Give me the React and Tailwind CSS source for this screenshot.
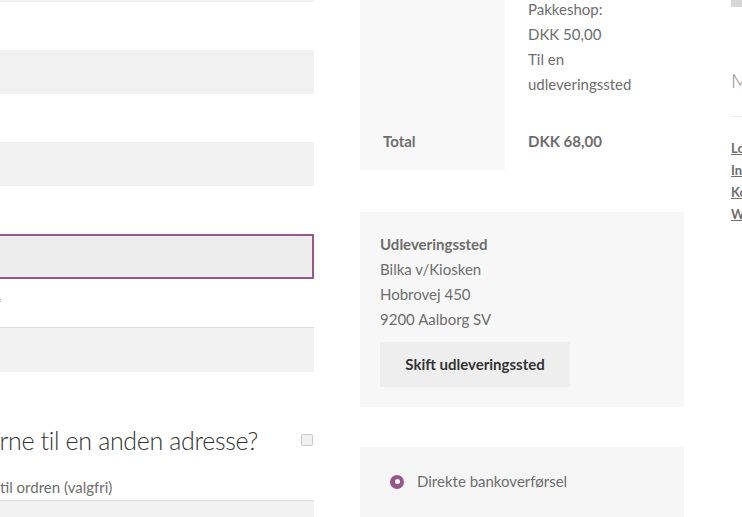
import { useState } from 'react';

const body = { fontFamily: '"Lato", "Liberation Sans", sans-serif' };

function Field({ label, required, focused, bordered, className = '' }) {
  return (
    <div className={className}>
      <label className="flex h-[48px] items-center whitespace-nowrap text-[15px] text-[#6d6d6d]">
        <span className={required ? 'w-[402px] shrink-0 text-right' : 'w-[380px] shrink-0 text-right'}>
          {label}
          {required ? <span className="text-[#e2401c]"> *</span> : null}
        </span>
      </label>
      <div
        className={
          focused
            ? 'h-[45px] border-2 border-[#96588a] bg-[#ededed]'
            : bordered
              ? 'h-[45px] border-t border-[#dcdcdc] bg-[#f2f2f2]'
              : 'h-[44px] bg-[#f2f2f2]'
        }
      />
    </div>
  );
}

function CheckoutFields() {
  return (
    <div className="ml-[-400px] w-[714px] shrink-0">
      <div className="h-[2px] bg-[#f2f2f2]" />
      <Field label="Virksomhedsnavn (valgfri)" />
      <Field label="Adresse" />
      <Field label="By" focused />
      <Field label="Postnummer" required bordered />

      <div className="mt-[50px] flex items-center justify-end pr-[1px]">
        <h3 className="whitespace-nowrap text-[25px] font-light leading-[36px] tracking-[-0.35px] text-[#333333]">
          Lever varerne til en anden adresse?
        </h3>
        <span className="ml-[43px] h-[12px] w-[12px] rounded-[2px] border border-[#c8c8c8] bg-[#f0f0f0]" />
      </div>

      <label className="mt-[16px] flex h-[26px] items-center whitespace-nowrap text-[15px] text-[#6d6d6d]">
        <span className="w-[400px] shrink-0 text-right">Bemærkninger&nbsp;</span>
        <span>til ordren (valgfri)</span>
      </label>
      <div className="h-[40px] border-t border-[#dcdcdc] bg-[#f2f2f2]" />
    </div>
  );
}

function OrderReview() {
  return (
    <div className="w-[324px] shrink-0">
      <table className="w-full border-collapse text-[15px] leading-[25px] text-[#6d6d6d]">
        <tbody>
          <tr>
            <th className="w-[145px] bg-[#f8f8f8]" />
            <td className="pb-[16px] pl-[23px] pt-0 align-top">
              <div className="mt-[-3px]">Pakkeshop:</div>
              <div>DKK 50,00</div>
              <div>Til en</div>
              <div>udleveringssted</div>
            </td>
          </tr>
          <tr>
            <th className="bg-[#f8f8f8] px-[23px] pb-[16px] pt-[16px] text-left font-bold">Total</th>
            <td className="pb-[16px] pl-[23px] pt-[16px] align-top font-bold">DKK 68,00</td>
          </tr>
        </tbody>
      </table>

      <section className="mt-[42px] bg-[#f7f7f7] px-[20px] pb-[20px] pt-[20px] text-[15px] leading-[25px] text-[#6d6d6d]">
        <p className="font-bold">Udleveringssted</p>
        <p>Bilka v/Kiosken</p>
        <p>Hobrovej 450</p>
        <p>9200 Aalborg SV</p>
        <button
          type="button"
          className="mt-[10px] h-[45px] w-[190px] bg-[#eeeeee] text-[15px] font-bold text-[#333333]"
        >
          Skift udleveringssted
        </button>
      </section>

      <section className="mt-[40px] h-[80px] bg-[#f5f5f5] pl-[30px] pt-[22px]">
        <div className="flex items-center gap-[13px] text-[15px] leading-[25px] text-[#6d6d6d]">
          <span className="flex h-[14px] w-[14px] items-center justify-center rounded-full bg-[#96588a]">
            <span className="h-[5px] w-[5px] rounded-full bg-white" />
          </span>
          Direkte bankoverførsel
        </div>
      </section>
    </div>
  );
}

function Sidebar() {
  return (
    <aside className="w-[200px] shrink-0">
      <div className="h-[7px] w-[40px] bg-[#d6d6d6]" />
      <h3 className="mt-[57px] text-[20px] font-light leading-[32px] text-[#8a8a8a]">Mest populære</h3>
      <div className="mt-[20px] h-px bg-[#ececec]" />
      <ul className="mt-[20px] text-[13px] font-bold leading-[22px] text-[#6d6d6d]">
        <li><a className="underline" href="#">Log ind</a></li>
        <li><a className="underline" href="#">Information</a></li>
        <li><a className="underline" href="#">Kontakt</a></li>
        <li><a className="underline" href="#">Webshop</a></li>
      </ul>
    </aside>
  );
}

export default function App() {
  const [page] = useState('checkout');
  return (
    <div data-page={page} className="h-[517px] w-[742px] overflow-hidden bg-white" style={body}>
      <div className="flex items-start">
        <CheckoutFields />
        <div className="ml-[46px]">
          <OrderReview />
        </div>
        <div className="ml-[47px]">
          <Sidebar />
        </div>
      </div>
    </div>
  );
}
